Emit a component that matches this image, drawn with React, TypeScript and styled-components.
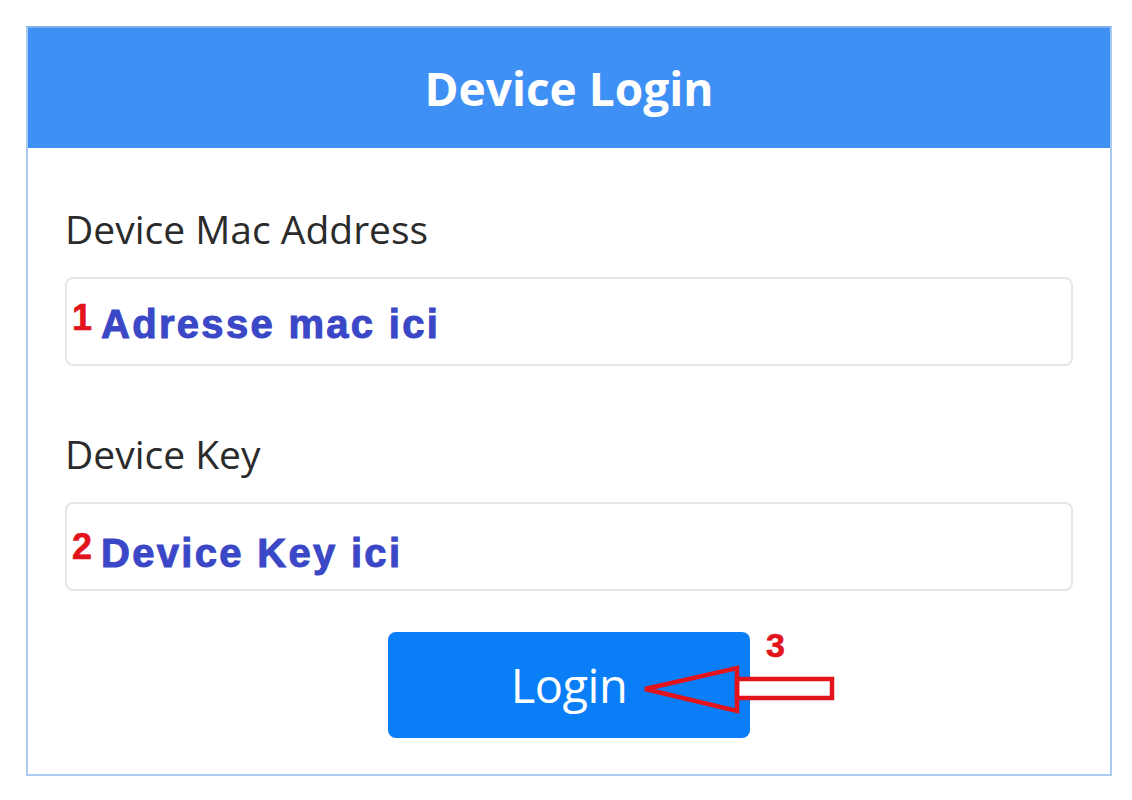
import styled, { createGlobalStyle } from "styled-components"

const GlobalStyle = createGlobalStyle`
  html, body {
    margin: 0;
    padding: 0;
    background: #ffffff;
  }
  body {
    font-family: "Open Sans", "Noto Sans", sans-serif;
  }
`

const Page = styled.div`
  padding: 26px 0 0 26px;
`

const Card = styled.div`
  width: 1086px;
  height: 750px;
  box-sizing: border-box;
  border: 2px solid #a9cbef;
  border-top-color: #7fb0ec;
  display: flex;
  flex-direction: column;
`

const Header = styled.div`
  height: 120px;
  background: #3f90f5;
  display: flex;
  align-items: center;
  justify-content: center;
  color: #ffffff;
  font-size: 46px;
  font-weight: 700;
`

const Body = styled.div`
  padding: 0 37px;
  display: flex;
  flex-direction: column;
`

const Label = styled.label<{ $top: number }>`
  margin-top: ${({ $top }) => $top}px;
  font-size: 39px;
  line-height: 46px;
  color: #2b2b2b;
`

const Field = styled.div<{ $shift: number }>`
  margin-top: 25px;
  height: 89px;
  box-sizing: border-box;
  border: 2px solid #e6e6e6;
  border-radius: 8px;
  display: flex;
  align-items: center;
  padding: ${({ $shift }) => $shift}px 0 0 5px;
  font-family: "Liberation Sans", Arial, sans-serif;
  font-weight: 700;
`

const Step = styled.span`
  color: #e3131c;
  font-family: "Liberation Sans", Arial, sans-serif;
  font-weight: 700;
  font-size: 36px;
  line-height: 1;
  -webkit-text-stroke: 0.6px #e3131c;
`

const FieldStep = styled(Step)`
  position: relative;
  top: -6px;
  margin-right: 9px;
`

const FieldText = styled.span`
  color: #3a47c6;
  font-size: 40px;
  letter-spacing: 2.3px;
  line-height: 1;
  -webkit-text-stroke: 1px #3a47c6;
`

const ButtonRow = styled.div`
  margin-top: 41px;
  display: flex;
  justify-content: center;
`

const ButtonWrap = styled.div`
  position: relative;
`

const LoginButton = styled.button`
  width: 362px;
  height: 106px;
  border: none;
  border-radius: 8px;
  background: #0a7ef7;
  color: #ffffff;
  font-family: "Open Sans", "Noto Sans", sans-serif;
  font-size: 47px;
  letter-spacing: -0.5px;
  padding: 0;
  cursor: pointer;
`

const ButtonStep = styled(Step)`
  position: absolute;
  left: 378px;
  top: -4px;
  font-size: 34px;
`

const Arrow = styled.svg`
  position: absolute;
  left: 250px;
  top: 30px;
  overflow: visible;
`

export default function App() {
  return (
    <>
      <GlobalStyle />
      <Page>
        <Card>
          <Header>Device Login</Header>
          <Body>
            <Label $top={58}>Device Mac Address</Label>
            <Field $shift={4}>
              <FieldStep>1</FieldStep>
              <FieldText>Adresse mac ici</FieldText>
            </Field>
            <Label $top={65}>Device Key</Label>
            <Field $shift={12}>
              <FieldStep>2</FieldStep>
              <FieldText>Device Key ici</FieldText>
            </Field>
            <ButtonRow>
              <ButtonWrap>
                <LoginButton>Login</LoginButton>
                <ButtonStep>3</ButtonStep>
                <Arrow width="200" height="60" viewBox="0 0 200 60">
                  <rect x="99" y="17" width="95" height="19" fill="#ffffff" stroke="#e3131c" strokeWidth="4.5" />
                  <polygon points="7,27 99,6 99,17 99,36 99,49" fill="none" stroke="#e3131c" strokeWidth="4.5" strokeLinejoin="miter" />
                </Arrow>
              </ButtonWrap>
            </ButtonRow>
          </Body>
        </Card>
      </Page>
    </>
  )
}
